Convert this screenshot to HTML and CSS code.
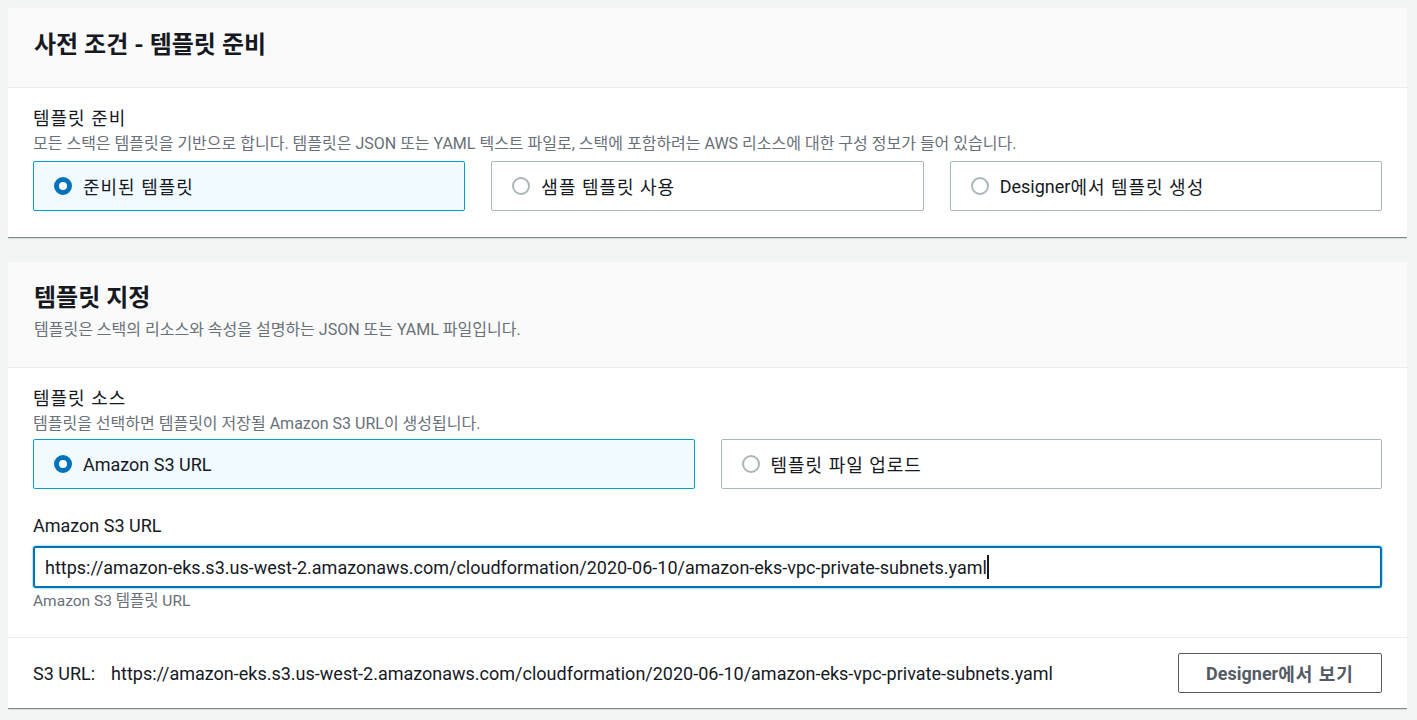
FILE: index.html
```html
<!DOCTYPE html>
<html lang="ko">

<head>
	<meta charset="utf-8">
	<title>템플릿 지정</title>
	<link rel="stylesheet" href="styles.css">
</head>

<body>
	<!-- Prerequisite - prepare template -->
	<div class="card">
		<div class="card-header first">
			<h2>사전 조건 - 템플릿 준비</h2>
		</div>
		<div class="card-body">
			<div class="label ko">템플릿 준비</div>
			<div class="desc">모든 스택은 템플릿을 기반으로 합니다. 템플릿은 JSON 또는 YAML 텍스트 파일로, 스택에 포함하려는 AWS 리소스에 대한 구성 정보가 들어 있습니다.</div>
			<div class="tiles three">
				<div class="tile selected"><span class="radio"></span><span class="ko">준비된 템플릿</span></div>
				<div class="tile"><span class="radio"></span><span class="ko">샘플 템플릿 사용</span></div>
				<div class="tile"><span class="radio"></span>Designer<span class="ko">에서 템플릿 생성</span></div>
			</div>
		</div>
	</div>

	<!-- Specify template -->
	<div class="card">
		<div class="card-header">
			<h2>템플릿 지정</h2>
			<div class="desc header-desc">템플릿은 스택의 리소스와 속성을 설명하는 JSON 또는 YAML 파일입니다.</div>
		</div>
		<div class="card-body">
			<div class="label ko">템플릿 소스</div>
			<div class="desc">템플릿을 선택하면 템플릿이 저장될 Amazon S3 URL이 생성됩니다.</div>
			<div class="tiles two">
				<div class="tile selected"><span class="radio"></span>Amazon S3 URL</div>
				<div class="tile"><span class="radio"></span><span class="ko">템플릿 파일 업로드</span></div>
			</div>

			<div class="field">
				<div class="label">Amazon S3 URL</div>
				<div class="input">https://amazon-eks.s3.us-west-2.amazonaws.com/cloudformation/2020-06-10/amazon-eks-vpc-private-subnets.yaml<span class="caret"></span></div>
				<div class="hint">Amazon S3 템플릿 URL</div>
			</div>
		</div>
		<div class="card-footer">
			<div class="s3-url"><span class="s3-key">S3 URL:</span>https://amazon-eks.s3.us-west-2.amazonaws.com/cloudformation/2020-06-10/amazon-eks-vpc-private-subnets.yaml</div>
			<div class="button">Designer<span class="ko">에서 보기</span></div>
		</div>
	</div>
</body>

</html>
```

FILE: styles.css
```css
body {
	background-color: #f2f3f3;
	font-family: Roboto, "Noto Sans CJK KR", sans-serif;
	color: #16191f;
	margin: 8px 10px 8px 8px;
}

/* Korean glyphs run a little wider in the original */
.ko {
	letter-spacing: 1px;
}

.card {
	background-color: #ffffff;
	box-shadow: 0 1px 1px 0 rgba(0, 28, 36, 0.3), 1px 1px 1px 0 rgba(0, 28, 36, 0.15), -1px 1px 1px 0 rgba(0, 28, 36, 0.15);
	margin-bottom: 25px;
}

.card-header {
	background-color: #fafafa;
	border-bottom: 1px solid #eaeded;
	padding: 18px 26px 25px;
}

.card-header.first {
	padding: 19px 26px 24px;
}

h2 {
	margin: 0;
	font-size: 24px;
	font-weight: bold;
	line-height: 36px;
}

.header-desc {
	margin-top: 2px;
}

.card-body {
	padding: 18px 25px 26px;
}

.label {
	font-size: 18px;
	line-height: 26px;
}

.desc {
	font-size: 16px;
	line-height: 24px;
	color: #687078;
}

.tiles {
	display: grid;
	gap: 26px;
	margin-top: 5px;
}

.tiles.three {
	grid-template-columns: 1fr 1fr 1fr;
}

.tiles.two {
	grid-template-columns: 1fr 1fr;
	margin-top: 3px;
}

.tile {
	display: flex;
	align-items: center;
	height: 48px;
	border: 1px solid #aab7b8;
	border-radius: 2px;
	padding: 0 20px;
	font-size: 18px;
}

.tile.selected {
	background-color: #f1faff;
	border-color: #00a1c9;
}

.radio {
	box-sizing: border-box;
	width: 18px;
	height: 18px;
	border-radius: 50%;
	border: 2px solid #aab7b8;
	margin-right: 11px;
	background-color: #ffffff;
	flex-shrink: 0;
}

.selected .radio {
	border: 5px solid #0073bb;
}

.field {
	margin-top: 24px;
}

.field .label {
	margin-bottom: 7px;
}

.input {
	box-sizing: border-box;
	display: flex;
	align-items: center;
	height: 42px;
	border: 2px solid #0073bb;
	border-radius: 3px;
	padding: 0 10px;
	font-size: 18px;
	box-shadow: 0 0 2px #00a1c9;
}

.caret {
	display: inline-block;
	width: 2px;
	height: 24px;
	background-color: #16191f;
}

.hint {
	margin-top: 3px;
	font-size: 15.5px;
	line-height: 20px;
	color: #687078;
}

.card-footer {
	display: flex;
	align-items: center;
	justify-content: space-between;
	border-top: 1px solid #eaeded;
	padding: 15px 25px 15px 25px;
	font-size: 18px;
}

.s3-key {
	margin-right: 16px;
}

.button {
	box-sizing: border-box;
	width: 204px;
	height: 40px;
	border: 1px solid #545b64;
	border-radius: 2px;
	display: flex;
	align-items: center;
	justify-content: center;
	font-weight: bold;
	color: #545b64;
	font-size: 18px;
}
```
